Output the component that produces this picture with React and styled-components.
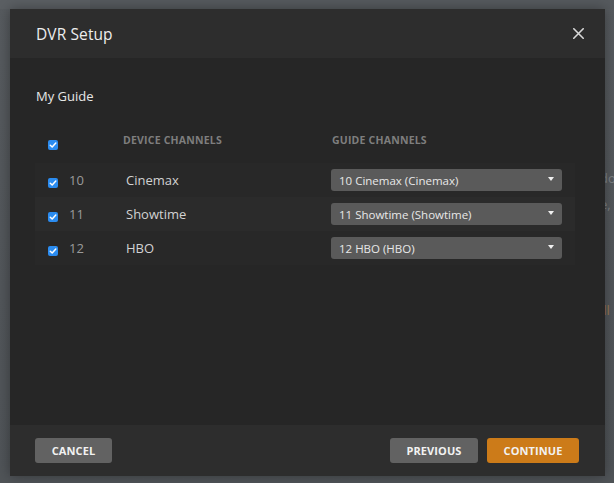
import React from "react";
import styled, { createGlobalStyle } from "styled-components";

const Global = createGlobalStyle`
  html, body { margin: 0; padding: 0; }
  body {
    width: 614px; height: 483px; overflow: hidden;
    background: #53575b;
    font-family: "Open Sans", "Noto Sans", sans-serif;
  }
`;

const Page = styled.div`
  position: relative;
  width: 614px;
  height: 483px;
  background: linear-gradient(180deg, #575b5f 0%, #52565a 60%, #505458 100%);
  overflow: hidden;
`;

const TopStrip = styled.div`
  display: flex;
  height: 9px;
`;
const StripPart = styled.div`
  width: ${(p) => p.$w}px;
  flex: ${(p) => (p.$w ? "none" : "1")};
  background: ${(p) => p.$bg};
`;

const BehindText = styled.div`
  position: absolute;
  left: 600px;
  top: 168px;
  display: flex;
  flex-direction: column;
  gap: 6px;
  font-size: 13px;
  color: #7d8185;
  line-height: 20px;
`;
const BehindLine = styled.span`
  color: ${(p) => p.$c || "#7d8185"};
  white-space: nowrap;
  margin-top: ${(p) => p.$mt || 0}px;
`;

const Modal = styled.div`
  position: absolute;
  left: 10px;
  top: 9px;
  width: 595px;
  height: 467px;
  display: flex;
  flex-direction: column;
  background: #262626;
  box-shadow: 0 0 12px rgba(0, 0, 0, 0.35);
`;

const Header = styled.div`
  height: 49px;
  flex: none;
  display: flex;
  align-items: center;
  justify-content: space-between;
  padding: 0 21px 0 26px;
  background: #2d2d2d;
`;

const Title = styled.h1`
  margin: 0;
  font-size: 15.5px;
  font-weight: 500;
  color: #eeeeee;
  letter-spacing: 0.1px;
`;

const Close = styled.button`
  border: 0;
  background: none;
  padding: 0;
  width: 11px;
  height: 11px;
  display: flex;
  cursor: pointer;
`;

const Body = styled.div`
  flex: 1;
  padding: 29px 26px 0 25px;
`;

const Section = styled.h2`
  margin: 0 0 0 1px;
  font-size: 13px;
  font-weight: 500;
  color: #e6e6e6;
  line-height: 18px;
`;

const Table = styled.div`
  margin-top: 23px;
  width: 540px;
`;

const GRID = "21px 57px 205px 231px";

const HeadRow = styled.div`
  display: grid;
  grid-template-columns: ${GRID};
  padding: 0 13px;
  height: 35px;
  align-items: start;
`;

const HeadLabel = styled.div`
  font-size: 10.5px;
  font-weight: 700;
  color: #7e7e7e;
  text-transform: uppercase;
  letter-spacing: 0.2px;
  line-height: 14px;
  margin-top: 5px;
  margin-left: ${(p) => p.$ml || 0}px;
`;

const Row = styled.div`
  display: grid;
  grid-template-columns: ${GRID};
  padding: 0 13px;
  height: 34px;
  align-items: center;
  background: ${(p) => (p.$alt ? "#2b2b2b" : "#282828")};
`;

const Check = styled.span`
  width: 10px;
  height: 10px;
  border-radius: 2px;
  background: #2b8cf0;
  display: flex;
  align-items: center;
  justify-content: center;
  margin-top: ${(p) => p.$mt || 0}px;
`;

const Num = styled.div`
  font-size: 13px;
  color: #9a9a9a;
`;

const Name = styled.div`
  font-size: 13px;
  color: #d2d2d2;
`;

const Select = styled.div`
  height: 22px;
  border-radius: 3px;
  background: #5a5a5a;
  display: flex;
  align-items: center;
  justify-content: space-between;
  padding: 0 8px 0 8px;
  font-size: 11.5px;
  color: #e8e8e8;
`;

const Caret = styled.span`
  width: 0;
  height: 0;
  border-left: 3.5px solid transparent;
  border-right: 3.5px solid transparent;
  border-top: 4px solid #f0f0f0;
  margin-top: -2px;
`;

const Footer = styled.div`
  height: 51px;
  flex: none;
  display: flex;
  align-items: center;
  padding: 0 26px 0 25px;
  background: #2d2d2d;
  gap: 9px;
`;

const Button = styled.button`
  height: 25px;
  width: ${(p) => p.$w}px;
  border: 0;
  border-radius: 3px;
  background: ${(p) => (p.$primary ? "#cc7b19" : "#626262")};
  color: #f2f2f2;
  font-family: "Open Sans", "Noto Sans", sans-serif;
  font-size: 11px;
  font-weight: 700;
  text-transform: uppercase;
  letter-spacing: 0.1px;
  padding: 0;
  margin-left: ${(p) => (p.$push ? "auto" : "0")};
  cursor: pointer;
`;

const Tick = () => (
  <svg width="8" height="8" viewBox="0 0 8 8">
    <path d="M1.3 4.2 L3.2 6 L6.8 2" fill="none" stroke="#fff" strokeWidth="1.5" strokeLinecap="round" strokeLinejoin="round" />
  </svg>
);

const rows = [
  { num: "10", name: "Cinemax", guide: "10 Cinemax (Cinemax)" },
  { num: "11", name: "Showtime", guide: "11 Showtime (Showtime)" },
  { num: "12", name: "HBO", guide: "12 HBO (HBO)" },
];

export default function App() {
  return (
    <>
      <Global />
      <Page>
        <TopStrip>
          <StripPart $w={90} $bg="#5b5f63" />
          <StripPart $bg="#565a5e" />
        </TopStrip>
        <BehindText>
          <BehindLine>do</BehindLine>
          <BehindLine>e,</BehindLine>
          <BehindLine $c="#9a7a4e" $mt={62}>t</BehindLine>
          <BehindLine $c="#9a7a4e" $mt={-8}>ill</BehindLine>
        </BehindText>
        <Modal>
          <Header>
            <Title>DVR Setup</Title>
            <Close aria-label="Close">
              <svg width="11" height="11" viewBox="0 0 11 11">
                <path d="M0.8 0.8 L10.2 10.2 M10.2 0.8 L0.8 10.2" stroke="#d8d8d8" strokeWidth="1.6" strokeLinecap="round" />
              </svg>
            </Close>
          </Header>
          <Body>
            <Section>My Guide</Section>
            <Table>
              <HeadRow>
                <Check $mt={12}><Tick /></Check>
                <span />
                <HeadLabel $ml={-3}>Device Channels</HeadLabel>
                <HeadLabel $ml={1}>Guide Channels</HeadLabel>
              </HeadRow>
              {rows.map((r, i) => (
                <Row key={r.num} $alt={i % 2 === 1}>
                  <Check $mt={6}><Tick /></Check>
                  <Num>{r.num}</Num>
                  <Name>{r.name}</Name>
                  <Select>
                    <span>{r.guide}</span>
                    <Caret />
                  </Select>
                </Row>
              ))}
            </Table>
          </Body>
          <Footer>
            <Button $w={77}>Cancel</Button>
            <Button $w={88} $push>Previous</Button>
            <Button $w={92} $primary>Continue</Button>
          </Footer>
        </Modal>
      </Page>
    </>
  );
}
